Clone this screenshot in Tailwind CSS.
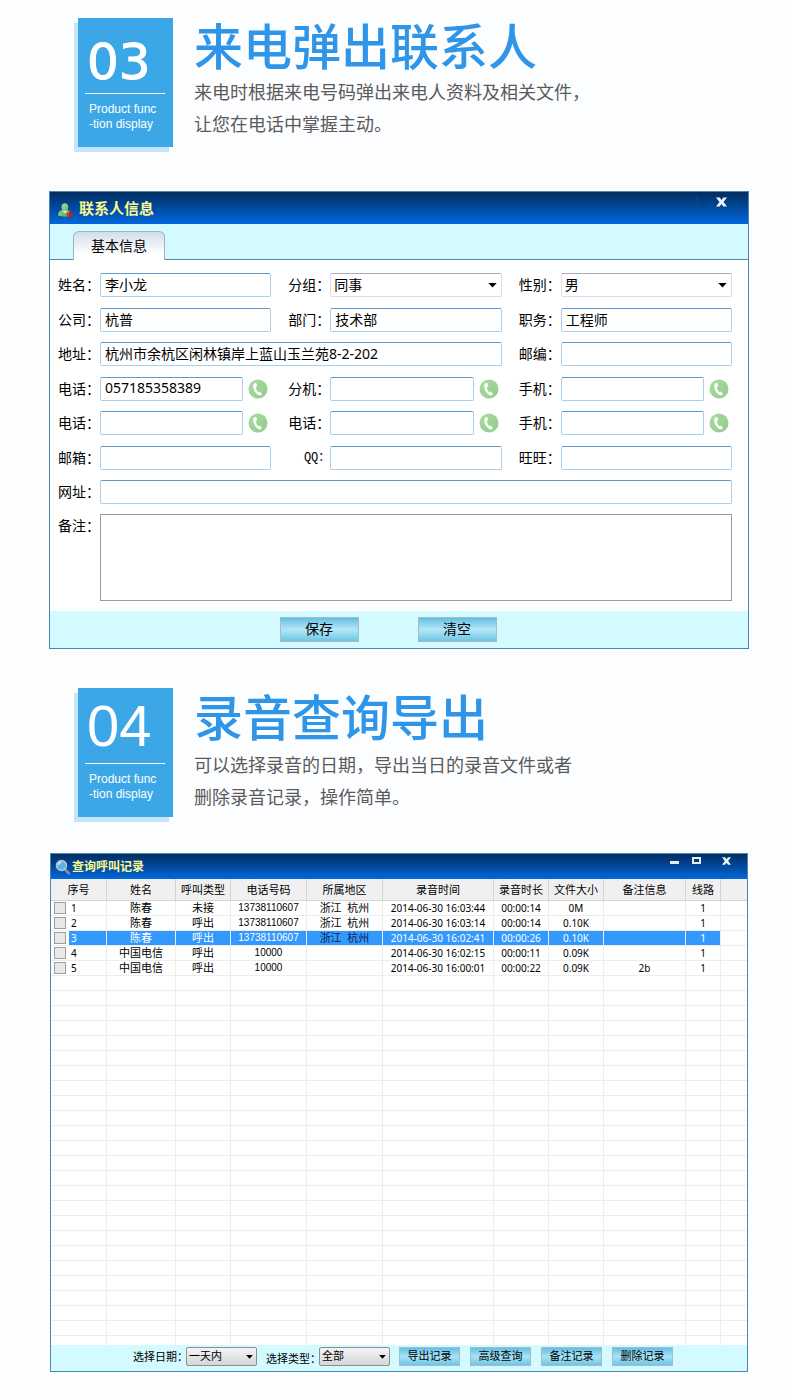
<!DOCTYPE html>
<html lang="zh-CN">
<head>
<meta charset="utf-8">
<meta name="viewport" content="width=device-width, initial-scale=1">
<title>产品功能展示</title>
<script src="https://cdn.jsdelivr.net/npm/@tailwindcss/browser@4"></script>
</head>
<body class="bg-[#fcfdff] font-['Noto_Sans','Noto_Sans_CJK_SC',sans-serif] text-black">
<svg class="absolute h-0 w-0" aria-hidden="true">
  <defs>
    <linearGradient id="green" x1="0" y1="0" x2="1" y2="1"><stop offset="0" stop-color="#a9dba0"/><stop offset="1" stop-color="#93cb8c"/></linearGradient>
    <linearGradient id="person" x1="0" y1="0" x2="1" y2="1"><stop offset="0" stop-color="#b6e6a8"/><stop offset="1" stop-color="#4c9a45"/></linearGradient>
    <symbol id="phone" viewBox="0 0 20 20">
      <circle cx="10" cy="10" r="9.5" fill="url(#green)"/>
      <path d="M6.400 4.200 8.300 4l.8 3.300-1.300.9c.3 2.100 1.200 3.700 2.600 5.100l1.600-.7 2 2.300-1.400 1.500c-1 .3-2.100 0-3.200-.9C7 13.500 5.400 10.800 5.200 7.300c0-1.500.4-2.500 1.200-3.100z" fill="#fff"/>
    </symbol>
    <symbol id="arrow" viewBox="0 0 10 6"><path d="M0 0h10L5 5.500z" fill="#000"/></symbol>
  </defs>
</svg>

<section class="flex gap-[21px] pt-[18px] pr-4 pl-[78px]">
  <div class="h-[129px] w-[95px] shrink-0 bg-[#3ba7e6] px-[7px] text-white shadow-[-4px_5px_0_#c4e5f8]">
    <div class="mt-3 flex h-[63px] items-center pl-[2px] font-['DejaVu_Sans',sans-serif] text-[50px] leading-none [-webkit-text-stroke:1px_white]">03</div>
    <div class="mr-px border-t border-white pt-2 pl-1 font-['Liberation_Sans',sans-serif] text-xs leading-[15px]">Product func<br>-tion display</div>
  </div>
  <div>
    <h2 class="mt-px h-14 font-['Noto_Sans_CJK_SC',sans-serif] text-[49px] leading-[50px] font-medium text-[#2f95e8]">来电弹出联系人</h2>
    <p class="font-['Noto_Sans_CJK_SC',sans-serif] text-lg leading-8 text-[#5a5a5a]">来电时根据来电号码弹出来电人资料及相关文件，<br>让您在电话中掌握主动。</p>
  </div>
</section>

<form class="mt-11 mr-[41px] ml-[49px] border border-[#4a86b0] bg-white text-sm">
  <header class="flex h-8 items-center bg-linear-to-b from-[#012d61] to-[#0068de] pl-2">
    <svg class="mt-1 h-4 w-4" viewBox="0 0 16 16">
      <path d="M0 13.500C0 10.500 1.500 8.600 4.300 8 2.900 5.500 3.200 1.500 6.800 1.300s4.200 4 2.700 6.700c2.700.6 4 2.500 4 5.500-3 1.600-10 1.600-13.500 0z" fill="url(#person)"/>
      <path d="M4.500 8.800h4.800L7 11.500z" fill="#d8f3d0"/>
      <path d="M9 12.500h6M12 9.500v6" stroke="#e01010" stroke-width="2"/>
    </svg>
    <h3 class="ml-[5px] flex-1 text-[15px] leading-8 font-bold text-[#fdf98c]">联系人信息</h3>
    <div class="mb-[11px] h-4 w-px bg-[#0b4a80]"></div>
    <button type="button" aria-label="关闭" class="mr-[21px] mb-3 ml-[18px] flex h-5 items-center">
      <svg class="h-[10px] w-[11px]" viewBox="0 0 12 10"><path d="M0 0h4l2 2.700L8 0h4L8.200 5l3.800 5H8L6 7.300 4 10H0l3.800-5z" fill="#f0f2f5"/></svg>
    </button>
  </header>
  <div class="flex h-9 items-end border-b border-[#5488ad] bg-[#d2faff] pl-[23px]">
    <button type="button" class="-mb-px h-[29px] rounded-t-md border border-b-0 border-[#9cb4c4] bg-linear-to-b from-[#d3deea] to-white to-80% px-[17px]">基本信息</button>
  </div>
  <div class="pt-[13px] pr-4 pb-[10px] pl-2">
    <div class="grid h-[231px] grid-cols-3 content-between gap-x-[17px] [&_label]:w-[42px] [&_label]:shrink-0 [&_label]:whitespace-nowrap [&_input]:h-6 [&_input]:w-full [&_input]:min-w-0 [&_input]:rounded-xs [&_input]:border [&_input]:border-[#a9d0ea] [&_input]:border-t-[#5f9aca] [&_input]:bg-white [&_input]:px-1 [&_input]:pb-[2px] [&_select]:h-6 [&_select]:w-full [&_select]:appearance-none [&_select]:rounded-xs [&_select]:border [&_select]:border-[#dcdcea] [&_select]:border-t-[#ababb5] [&_select]:bg-white [&_select]:px-[3px] [&_select]:pb-px">
      <div class="flex items-center"><label for="name">姓名：</label><input id="name" value="李小龙"></div>
      <div class="flex items-center"><label for="group">分组：</label><div class="relative flex-1"><select id="group"><option>同事</option></select><svg class="pointer-events-none absolute top-[10px] right-[5px] h-[5px] w-[9px]"><use href="#arrow"/></svg></div></div>
      <div class="flex items-center"><label for="sex">性别：</label><div class="relative flex-1"><select id="sex"><option>男</option></select><svg class="pointer-events-none absolute top-[10px] right-[5px] h-[5px] w-[9px]"><use href="#arrow"/></svg></div></div>

      <div class="flex items-center"><label for="company">公司：</label><input id="company" value="杭普"></div>
      <div class="flex items-center"><label for="dept">部门：</label><input id="dept" value="技术部"></div>
      <div class="flex items-center"><label for="job">职务：</label><input id="job" value="工程师"></div>

      <div class="col-span-2 flex items-center"><label for="addr">地址：</label><input id="addr" value="杭州市余杭区闲林镇岸上蓝山玉兰苑8-2-202"></div>
      <div class="flex items-center"><label for="zip">邮编：</label><input id="zip"></div>

      <div class="flex items-center"><label for="tel1">电话：</label><input id="tel1" value="057185358389"><button type="button" aria-label="拨打" class="mr-[3px] ml-[5px]"><svg class="h-5 w-5"><use href="#phone"/></svg></button></div>
      <div class="flex items-center"><label for="ext">分机：</label><input id="ext"><button type="button" aria-label="拨打" class="mr-[3px] ml-[5px]"><svg class="h-5 w-5"><use href="#phone"/></svg></button></div>
      <div class="flex items-center"><label for="mob1">手机：</label><input id="mob1"><button type="button" aria-label="拨打" class="mr-[3px] ml-[5px]"><svg class="h-5 w-5"><use href="#phone"/></svg></button></div>

      <div class="flex items-center"><label for="tel2">电话：</label><input id="tel2"><button type="button" aria-label="拨打" class="mr-[3px] ml-[5px]"><svg class="h-5 w-5"><use href="#phone"/></svg></button></div>
      <div class="flex items-center"><label for="tel3">电话：</label><input id="tel3"><button type="button" aria-label="拨打" class="mr-[3px] ml-[5px]"><svg class="h-5 w-5"><use href="#phone"/></svg></button></div>
      <div class="flex items-center"><label for="mob2">手机：</label><input id="mob2"><button type="button" aria-label="拨打" class="mr-[3px] ml-[5px]"><svg class="h-5 w-5"><use href="#phone"/></svg></button></div>

      <div class="flex items-center"><label for="mail">邮箱：</label><input id="mail"></div>
      <div class="flex items-center"><label for="qq" class="text-right font-['Liberation_Mono','Noto_Sans_CJK_SC',monospace] text-xs">QQ：</label><input id="qq"></div>
      <div class="flex items-center"><label for="ww">旺旺：</label><input id="ww"></div>

      <div class="col-span-3 flex items-center"><label for="url">网址：</label><input id="url"></div>
    </div>
    <div class="mt-[10px] flex">
      <label for="memo" class="w-[42px] shrink-0 leading-6">备注：</label>
      <textarea id="memo" class="h-[87px] flex-1 resize-none border border-[#9c9c9c] bg-white px-1"></textarea>
    </div>
  </div>
  <footer class="flex h-[37px] items-center justify-center gap-[59px] bg-[#d2faff] pr-[22px] pb-px">
    <button type="submit" class="h-[25px] w-[79px] border border-[#a3bcc8] bg-linear-to-b from-[#62bfe2] via-[#b4e6f7] to-[#6cc6e6]">保存</button>
    <button type="reset" class="h-[25px] w-[79px] border border-[#a3bcc8] bg-linear-to-b from-[#62bfe2] via-[#b4e6f7] to-[#6cc6e6]">清空</button>
  </footer>
</form>

<section class="mt-[39px] flex gap-[21px] pr-4 pl-[78px]">
  <div class="h-[129px] w-[95px] shrink-0 bg-[#3ba7e6] px-[7px] text-white shadow-[-4px_5px_0_#c4e5f8]">
    <div class="mt-2 flex h-[67px] items-center pl-[2px] font-['Liberation_Sans',sans-serif] text-[58px] leading-none"><span class="pb-2">04</span></div>
    <div class="mr-px border-t border-white pt-2 pl-1 font-['Liberation_Sans',sans-serif] text-xs leading-[15px]">Product func<br>-tion display</div>
  </div>
  <div>
    <h2 class="mt-[2px] h-[58px] font-['Noto_Sans_CJK_SC',sans-serif] text-[49px] leading-[50px] font-medium text-[#2f95e8]">录音查询导出</h2>
    <p class="font-['Noto_Sans_CJK_SC',sans-serif] text-lg leading-8 text-[#5a5a5a]">可以选择录音的日期，导出当日的录音文件或者<br>删除录音记录，操作简单。</p>
  </div>
</section>

<main class="mt-[36px] mr-[42px] mb-7 ml-[50px] border border-[#4a86b0] bg-white text-[11px]">
  <header class="flex h-[25px] items-center bg-linear-to-b from-[#012d61] to-[#0068de] pl-1">
    <svg class="h-4 w-4" viewBox="0 0 16 16">
      <path d="M10 10.500l4 4" stroke="#8a8f98" stroke-width="2.500" stroke-linecap="round"/>
      <circle cx="6.500" cy="6.500" r="5" fill="#5fb0e8" stroke="#b9c6d2" stroke-width="1.500"/>
      <path d="M3.500 6a3.300 3.300 0 0 1 3-2.800" stroke="#d8f0ff" stroke-width="1.200" fill="none"/>
    </svg>
    <h3 class="ml-px flex-1 text-xs font-bold text-[#fdf98c]">查询呼叫记录</h3>
    <div class="mr-4 mb-3 flex items-center">
      <button type="button" aria-label="最小化" class="h-3"><svg class="h-[9px] w-[10px]" viewBox="0 0 10 9"><path d="M0 5h9v3H0z" fill="#e8ecf2"/></svg></button>
      <button type="button" aria-label="最大化" class="ml-3 h-3"><svg class="h-[9px] w-[10px]" viewBox="0 0 10 9"><path d="M1 2h7v5H1z" fill="none" stroke="#e8ecf2" stroke-width="2"/></svg></button>
      <button type="button" aria-label="关闭" class="ml-5 h-3"><svg class="h-2 w-[9px]" viewBox="0 0 12 10"><path d="M0 0h4l2 2.700L8 0h4L8.200 5l3.800 5H8L6 7.300 4 10H0l3.800-5z" fill="#f0f2f5"/></svg></button>
    </div>
  </header>
  <table class="w-full table-fixed border-separate border-spacing-0 text-center [&_td]:h-[15px] [&_td]:border-r [&_td]:border-b [&_td]:border-[#ededed] [&_td]:p-0 [&_td]:leading-[14px] [&_td]:whitespace-nowrap [&_td:last-child]:border-r-0 [&_th]:h-[22px] [&_th]:border-r [&_th]:border-b [&_th]:border-[#d4d4d4] [&_th]:bg-[#f0f0f0] [&_th]:p-0 [&_th]:leading-5 [&_th]:font-normal [&_th]:whitespace-nowrap [&_th:last-child]:border-r-0 [&_td:nth-child(4)]:font-['Liberation_Sans',sans-serif] [&_td:nth-child(n+6)]:text-[10px] [&_td:nth-child(4)]:text-[10px]">
    <colgroup><col class="w-[56px]"><col class="w-[69px]"><col class="w-[55px]"><col class="w-[76px]"><col class="w-[76px]"><col class="w-[111px]"><col class="w-[55px]"><col class="w-[55px]"><col class="w-[82px]"><col class="w-[35px]"><col></colgroup>
    <thead><tr><th>序号</th><th>姓名</th><th>呼叫类型</th><th>电话号码</th><th>所属地区</th><th>录音时间</th><th>录音时长</th><th>文件大小</th><th>备注信息</th><th>线路</th><th></th></tr></thead>
    <tbody id="rows">
      <tr><td><label class="flex items-center text-[10px]"><input type="checkbox" class="mr-1 ml-[3px] h-3 w-3 shrink-0 appearance-none border border-[#9a9ea3] bg-[#e6e8ea]"><span class="flex-1 pl-px text-left">1</span></label></td><td>陈春</td><td>未接</td><td>13738110607</td><td>浙江&nbsp; 杭州</td><td>2014-06-30 16:03:44</td><td>00:00:14</td><td>0M</td><td></td><td>1</td><td></td></tr>
      <tr><td><label class="flex items-center text-[10px]"><input type="checkbox" class="mr-1 ml-[3px] h-3 w-3 shrink-0 appearance-none border border-[#9a9ea3] bg-[#e6e8ea]"><span class="flex-1 pl-px text-left">2</span></label></td><td>陈春</td><td>呼出</td><td>13738110607</td><td>浙江&nbsp; 杭州</td><td>2014-06-30 16:03:14</td><td>00:00:14</td><td>0.10K</td><td></td><td>1</td><td></td></tr>
      <tr class="text-white [&_td:nth-child(n+2):nth-child(-n+10)]:bg-[#3399ff]"><td><label class="flex items-center text-[10px]"><input type="checkbox" class="mr-[3px] ml-[3px] h-3 w-3 shrink-0 appearance-none border border-[#9a9ea3] bg-[#e6e8ea]"><span class="flex-1 bg-[#3399ff] pl-[2px] text-left">3</span></label></td><td>陈春</td><td>呼出</td><td>13738110607</td><td class="text-[#0a1e50]">浙江&nbsp; 杭州</td><td>2014-06-30 16:02:41</td><td>00:00:26</td><td>0.10K</td><td></td><td>1</td><td></td></tr>
      <tr><td><label class="flex items-center text-[10px]"><input type="checkbox" class="mr-1 ml-[3px] h-3 w-3 shrink-0 appearance-none border border-[#9a9ea3] bg-[#e6e8ea]"><span class="flex-1 pl-px text-left">4</span></label></td><td>中国电信</td><td>呼出</td><td>10000</td><td></td><td>2014-06-30 16:02:15</td><td>00:00:11</td><td>0.09K</td><td></td><td>1</td><td></td></tr>
      <tr><td><label class="flex items-center text-[10px]"><input type="checkbox" class="mr-1 ml-[3px] h-3 w-3 shrink-0 appearance-none border border-[#9a9ea3] bg-[#e6e8ea]"><span class="flex-1 pl-px text-left">5</span></label></td><td>中国电信</td><td>呼出</td><td>10000</td><td></td><td>2014-06-30 16:00:01</td><td>00:00:22</td><td>0.09K</td><td>2b</td><td>1</td><td></td></tr>
    </tbody>
    <tfoot><tr class="[&_td]:h-[9px]! [&_td]:border-b-0!"><td></td><td></td><td></td><td></td><td></td><td></td><td></td><td></td><td></td><td></td><td></td></tr></tfoot>
  </table>
  <footer class="flex h-[26px] items-start bg-[#d2faff] pt-[2px] pl-[82px] whitespace-nowrap">
    <label for="date" class="w-[53px] leading-5">选择日期：</label>
    <div class="relative"><select id="date" class="h-[19px] w-[71px] appearance-none rounded-xs border border-[#8a8f92] bg-linear-to-b from-[#f4f4f4] to-[#d4d6d8] px-[2px]"><option>一天内</option></select><svg class="pointer-events-none absolute top-[8px] right-1 h-[4px] w-[7px]"><use href="#arrow"/></svg></div>
    <label for="type" class="ml-[9px] w-[53px] pt-[2px] leading-5">选择类型：</label>
    <div class="relative"><select id="type" class="h-[19px] w-[71px] appearance-none rounded-xs border border-[#8a8f92] bg-linear-to-b from-[#f4f4f4] to-[#d4d6d8] px-[2px]"><option>全部</option></select><svg class="pointer-events-none absolute top-[8px] right-1 h-[4px] w-[7px]"><use href="#arrow"/></svg></div>
    <div class="ml-[9px] flex gap-[10px] [&_button]:h-[19px] [&_button]:w-[61px] [&_button]:border [&_button]:border-[#a3bcc8] [&_button]:bg-linear-to-b [&_button]:from-[#62bfe2] [&_button]:via-[#a8e2f6] [&_button]:to-[#6cc6e6]">
      <button type="button">导出记录</button><button type="button">高级查询</button><button type="button">备注记录</button><button type="button">删除记录</button>
    </div>
  </footer>
</main>
<script>
  // Fill the rest of the list with empty grid rows
  const body = document.getElementById('rows');
  for (let i = 0; i < 24; i++) {
    const tr = body.insertRow();
    for (let c = 0; c < 11; c++) tr.insertCell();
  }
</script>
</body>
</html>
